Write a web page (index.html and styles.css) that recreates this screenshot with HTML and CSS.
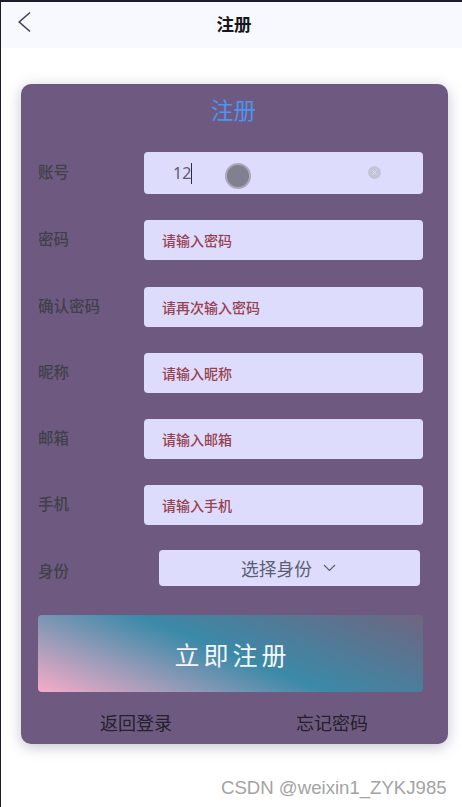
FILE: index.html
```html
<!DOCTYPE html>
<html lang="zh">
<head>
  <meta charset="UTF-8">
  <meta name="viewport" content="width=device-width, initial-scale=1.0">
  <title>注册</title>
  <link rel="stylesheet" href="styles.css">
</head>
<body>
  <header class="nav">
    <svg class="nav-back" width="14" height="22" viewBox="0 0 14 22">
      <path d="M12 1.5 L1.2 11 L12 20.5" fill="none" stroke="#3a4658" stroke-width="1.6"/>
    </svg>
    <span class="nav-title">注册</span>
  </header>

  <main class="card">
    <h2 class="card-title">注册</h2>

    <div class="row row-first">
      <label class="row-label">账号</label>
      <div class="field field-value">
        <span>12</span><i class="caret"></i>
        <svg class="clear" width="13" height="13" viewBox="0 0 13 13">
          <circle cx="6.5" cy="6.5" r="6.5" fill="#c3c5d6"/>
          <path d="M4.3 4.3 L8.7 8.7 M8.7 4.3 L4.3 8.7" stroke="#dedcfc" stroke-width="1"/>
        </svg>
        <i class="touch"></i>
      </div>
    </div>
    <div class="row row-pwd">
      <label class="row-label">密码</label>
      <div class="field">请输入密码</div>
    </div>
    <div class="row row-confirm">
      <label class="row-label">确认密码</label>
      <div class="field">请再次输入密码</div>
    </div>
    <div class="row">
      <label class="row-label">昵称</label>
      <div class="field">请输入昵称</div>
    </div>
    <div class="row">
      <label class="row-label">邮箱</label>
      <div class="field">请输入邮箱</div>
    </div>
    <div class="row">
      <label class="row-label">手机</label>
      <div class="field">请输入手机</div>
    </div>

    <div class="row row-select">
      <label class="row-label">身份</label>
      <div class="select">
        <span>选择身份</span>
        <svg width="13" height="8" viewBox="0 0 13 8">
          <path d="M1 1 L6.5 6.5 L12 1" fill="none" stroke="#5b5f70" stroke-width="1.2"/>
        </svg>
      </div>
    </div>

    <button class="submit">立即注册</button>

    <div class="links">
      <a class="link">返回登录</a>
      <a class="link">忘记密码</a>
    </div>
  </main>

  <div class="watermark">CSDN @weixin1_ZYKJ985</div>
</body>
</html>
```

FILE: styles.css
```css
/* page */
html, body {
  height: 100%;
}

body {
  margin: 0;
  height: 807px;
  overflow: hidden;
  position: relative;
  box-sizing: border-box;
  background: #fff;
  border-top: 2px solid #1c1c2a;
  border-left: 1px solid #1c1c2a;
  font-family: "Noto Sans CJK SC", "Noto Sans", sans-serif;
}

/* top bar */
.nav {
  height: 46px;
  background: #f8f8ff;
  display: flex;
  align-items: center;
  justify-content: center;
  position: relative;
}

.nav-back {
  position: absolute;
  left: 17px;
  top: 9px;
}

.nav-title {
  font-size: 17.5px;
  font-weight: 700;
  color: #16161c;
  margin-left: 5px;
  margin-top: -3px;
}

/* form card */
.card {
  width: 427px;
  height: 660px;
  margin: 36px 0 0 20px;
  box-sizing: border-box;
  padding: 0 25px 0 17px;
  background: #6e5a80;
  border-radius: 10px;
  box-shadow: 0 3px 14px rgba(90, 85, 130, 0.35);
}

.card-title {
  margin: 0 -6px 19px 0;
  height: 49px;
  line-height: 50px;
  box-sizing: border-box;
  border-bottom: 1px solid #675d78;
  text-align: center;
  font-size: 22.5px;
  font-weight: 400;
  color: #4d94f0;
}

.row {
  display: flex;
  align-items: center;
  margin-bottom: 26px;
}

.row-pwd {
  margin-bottom: 27px;
}

.row-label {
  width: 106px;
  flex: none;
  font-size: 15.5px;
  font-weight: 500;
  color: #413f4a;
  position: relative;
  top: -2px;
}

.field {
  flex: 1;
  height: 40px;
  box-sizing: border-box;
  padding-left: 18px;
  padding-bottom: 1px;
  display: flex;
  align-items: center;
  background: #dedcfd;
  border-radius: 4px;
  font-size: 14px;
  font-weight: 500;
  color: #97424f;
  position: relative;
}

.field-value {
  height: 42px;
  padding-left: 29px;
  padding-bottom: 0;
  font-family: "Noto Sans", sans-serif;
  font-size: 16px;
  font-weight: 400;
  color: #5c5d6c;
}

.caret {
  width: 1px;
  height: 21px;
  background: #2c2c3a;
}

.clear {
  position: absolute;
  left: 224px;
  top: 14px;
}

.touch {
  position: absolute;
  left: 81px;
  top: 11px;
  width: 22px;
  height: 22px;
  border-radius: 50%;
  background: #80808e;
  border: 2px solid #a9a8bf;
}

/* select */
.row-select {
  margin-top: -1px;
  margin-bottom: 29px;
}

.row-select .row-label {
  top: 2px;
}

.select {
  margin-left: 15px;
  width: 261px;
  height: 36px;
  box-sizing: border-box;
  padding-right: 2px;
  display: flex;
  align-items: center;
  justify-content: center;
  gap: 11px;
  background: #dedcfd;
  border-radius: 4px;
  font-size: 17.75px;
  color: #5b5f70;
}

/* submit */
.submit {
  display: block;
  width: 385px;
  height: 77px;
  padding: 0 0 0 4px;
  border: none;
  border-radius: 4px;
  background: linear-gradient(22deg, #f7acc9 0%, #3a8aa8 50%, #6f6581 100%);
  font-family: "Noto Sans CJK SC", sans-serif;
  font-size: 25px;
  letter-spacing: 4px;
  color: #f4f6fa;
}

.links {
  display: flex;
  margin-top: 17px;
  padding-left: 62px;
  gap: 124px;
}

.link {
  font-size: 18px;
  line-height: 27px;
  color: #24202c;
}

/* CSDN watermark over the page */
.watermark {
  position: absolute;
  left: 220px;
  top: 775px;
  font-family: "Liberation Sans", sans-serif;
  font-size: 18.6px;
  color: #a3a3a3;
}
```
